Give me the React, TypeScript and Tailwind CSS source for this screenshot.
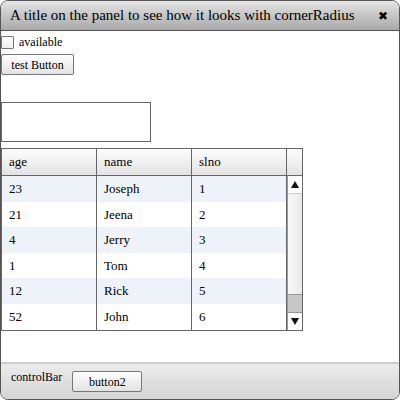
import React from "react";

const rows = [
  { age: "23", name: "Joseph", slno: "1" },
  { age: "21", name: "Jeena", slno: "2" },
  { age: "4", name: "Jerry", slno: "3" },
  { age: "1", name: "Tom", slno: "4" },
  { age: "12", name: "Rick", slno: "5" },
  { age: "52", name: "John", slno: "6" },
];

export default function App() {
  return (
    <div className="w-[400px] h-[400px] bg-white font-['Liberation_Serif','Times_New_Roman',serif]">
      <div className="w-[400px] h-[400px] border border-[#555] rounded-[8px] overflow-hidden flex flex-col bg-white text-[12px] text-black">
        <div className="h-[30px] shrink-0 flex items-center justify-between pl-[9px] pr-[11px] bg-gradient-to-b from-[#e4e4e4] to-[#a9a9a9] border-b border-[#555]">
          <span className="text-[15px] leading-none">A title on the panel to see how it looks with cornerRadius</span>
          <span className="text-[12px] font-bold leading-none font-['DejaVu_Sans',sans-serif]">✖</span>
        </div>
        <div className="flex-1 flex flex-col">
          <div className="flex items-center h-[20px] mt-[1px]">
            <div className="w-[13px] h-[13px] border border-[#777] bg-gradient-to-b from-white to-[#eee] rounded-[1px]" />
            <span className="ml-[5px] text-[12px]">available</span>
          </div>
          <div className="mt-[2px] flex">
            <div className="w-[73px] h-[21px] border border-[#777] rounded-[2px] bg-gradient-to-b from-white to-[#e2e2e2] flex items-center justify-center text-[12px]">test Button</div>
          </div>
          <div className="mt-[27px] w-[150px] h-[40px] border border-[#666]" />
          <div className="mt-[6px] w-[302px] h-[183px] border border-[#666] flex flex-col overflow-hidden text-[13px]">
            <div className="h-[27px] shrink-0 flex border-b border-[#666] bg-gradient-to-b from-[#fdfdfd] to-[#e3e3e3]">
              <div className="w-[95px] border-r border-[#666] flex items-center pl-[7px]">age</div>
              <div className="w-[95px] border-r border-[#666] flex items-center pl-[7px]">name</div>
              <div className="w-[95px] border-r border-[#666] flex items-center pl-[7px]">slno</div>
              <div className="flex-1" />
            </div>
            <div className="flex-1 min-h-0 flex">
              <div className="w-[285px] flex flex-col">
                {rows.map((r, i) => (
                  <div key={i} className={`h-[25.6px] shrink-0 flex ${i % 2 === 0 ? "bg-[#eef3fa]" : "bg-white"}`}>
                    <div className="w-[95px] border-r border-[#666] flex items-center pl-[7px]">{r.age}</div>
                    <div className="w-[95px] border-r border-[#666] flex items-center pl-[7px]">{r.name}</div>
                    <div className="w-[95px] border-r border-[#666] flex items-center pl-[7px]">{r.slno}</div>
                  </div>
                ))}
              </div>
              <div className="flex-1 flex flex-col bg-[#f4f4f4] border-l border-[#999]">
                <div className="h-[18px] shrink-0 flex items-center justify-center border-b border-[#ccc] bg-white">
                  <svg width="8" height="7" viewBox="0 0 8 7"><path d="M4 0 L8 7 L0 7 Z" fill="#111" /></svg>
                </div>
                <div className="flex-1 bg-gradient-to-r from-[#f8f8f8] to-[#eaeaea]" />
                <div className="h-[19px] shrink-0 bg-[#c8c8c8] border-y border-[#999]" />
                <div className="h-[17px] shrink-0 flex items-center justify-center bg-white">
                  <svg width="8" height="7" viewBox="0 0 8 7"><path d="M0 0 L8 0 L4 7 Z" fill="#111" /></svg>
                </div>
              </div>
            </div>
          </div>
        </div>
        <div className="h-[37px] shrink-0 border-t-2 border-[#ccc] bg-gradient-to-b from-[#ececec] to-[#d4d4d4] flex items-start pl-[10px] pt-[4px]">
          <span className="text-[12px] leading-none mt-[3px]">controlBar</span>
          <div className="ml-[10px] mt-[3px] w-[70px] h-[21px] border border-[#777] rounded-[2px] bg-gradient-to-b from-white to-[#e2e2e2] flex items-center justify-center text-[12px]">button2</div>
        </div>
      </div>
    </div>
  );
}
